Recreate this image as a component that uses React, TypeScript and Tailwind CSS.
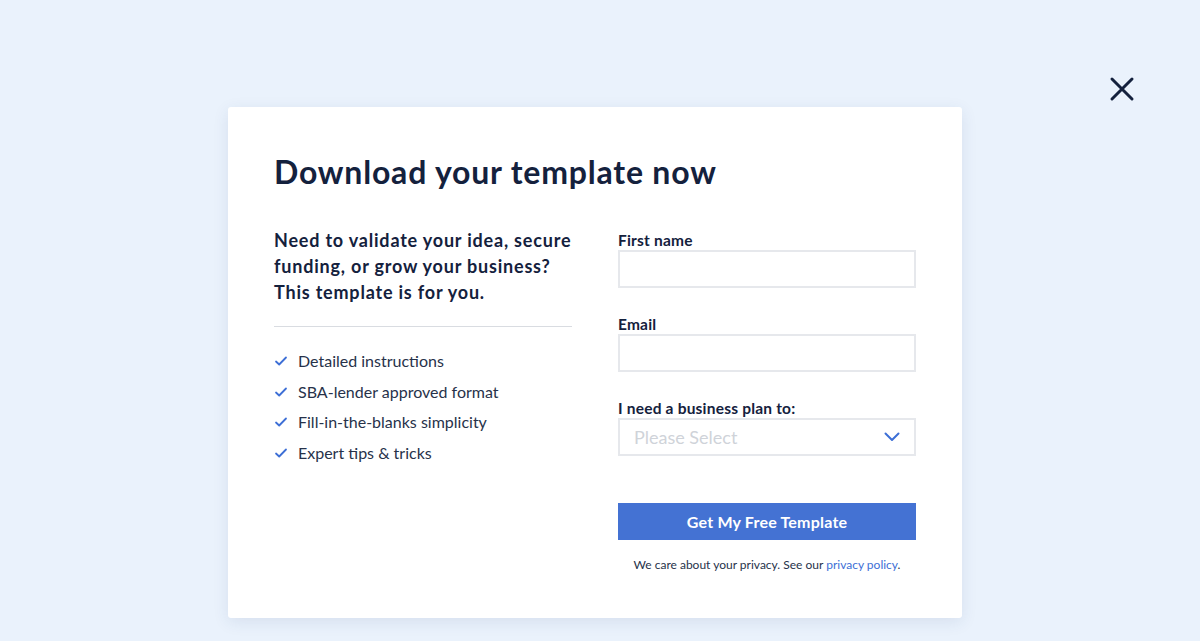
import React from 'react';

const features = [
  'Detailed instructions',
  'SBA-lender approved format',
  'Fill-in-the-blanks simplicity',
  'Expert tips & tricks',
];

const Check = () => (
  <svg width="14" height="14" viewBox="0 0 14 14" fill="none" className="shrink-0">
    <path d="M2 7.5l3.2 3L12 3.5" stroke="#3d6fd6" strokeWidth="1.8" strokeLinecap="round" strokeLinejoin="round" />
  </svg>
);

const Field = ({ label, className = '' }: { label: string; className?: string }) => (
  <div className={className}>
    <label className="block text-[15.5px] leading-5 font-bold tracking-[0.2px] text-[#14213d]">{label}</label>
    <input className="block w-full h-[38px] border-2 border-[#e6e8ec] bg-white outline-none px-3" />
  </div>
);

export default function App() {
  return (
    <div
      className="relative w-full h-[641px] bg-[#eaf2fc] overflow-hidden text-[#14213d]"
      style={{ fontFamily: 'Lato, "Noto Sans", sans-serif' }}
    >
      {/* close */}
      <button className="absolute left-[1108px] top-[75px] w-[28px] h-[28px] flex items-center justify-center">
        <svg width="26" height="26" viewBox="0 0 26 26" fill="none">
          <path d="M3 3l20 20M23 3L3 23" stroke="#14213d" strokeWidth="3" strokeLinecap="round" />
        </svg>
      </button>

      <div className="pt-[107px] pl-[228px]">
        <div className="w-[734px] h-[511px] bg-white rounded-[3px] shadow-[0_4px_16px_rgba(40,70,120,0.10)] px-[46px] pt-[47px]">
          <h1 className="text-[32px] leading-9 font-bold tracking-[0.8px]">Download your template now</h1>

          <div className="mt-[37px] flex gap-[46px]">
            <div className="w-[298px]">
              <p className="text-[18px] leading-[26px] font-bold tracking-[0.8px]">
                Need to validate your idea, secure funding, or grow your business? This template is for you.
              </p>
              <div className="mt-[21px] h-px bg-[#d9dce1]" />
              <ul className="mt-[22px] flex flex-col gap-[6.5px]">
                {features.map((f) => (
                  <li key={f} className="flex items-center gap-[10px] text-[16px] leading-6 text-[#27324a]">
                    <Check />
                    <span>{f}</span>
                  </li>
                ))}
              </ul>
            </div>

            <div className="w-[298px] pt-[3px]">
              <Field label="First name" />
              <Field label="Email" className="mt-[26px]" />
              <div className="mt-[26px]">
                <label className="block text-[15.5px] leading-5 font-bold tracking-[0.2px]">I need a business plan to:</label>
                <div className="h-[38px] border-2 border-[#e6e8ec] flex items-center justify-between pl-[14px] pr-[14px]">
                  <span className="text-[18px] text-[#cfd3d9]">Please Select</span>
                  <svg width="16" height="10" viewBox="0 0 16 10" fill="none">
                    <path d="M1.5 1.5L8 8l6.5-6.5" stroke="#3d6fd6" strokeWidth="2" strokeLinecap="round" strokeLinejoin="round" />
                  </svg>
                </div>
              </div>
              <button className="mt-[47px] w-full h-[37px] bg-[#4472d3] text-white text-[16px] font-bold tracking-[0.2px]">
                Get My Free Template
              </button>
              <p className="mt-[17px] text-center text-[12px] leading-4 text-[#27324a]">
                We care about your privacy. See our <span className="text-[#3d6fd6]">privacy policy</span>.
              </p>
            </div>
          </div>
        </div>
      </div>
    </div>
  );
}
